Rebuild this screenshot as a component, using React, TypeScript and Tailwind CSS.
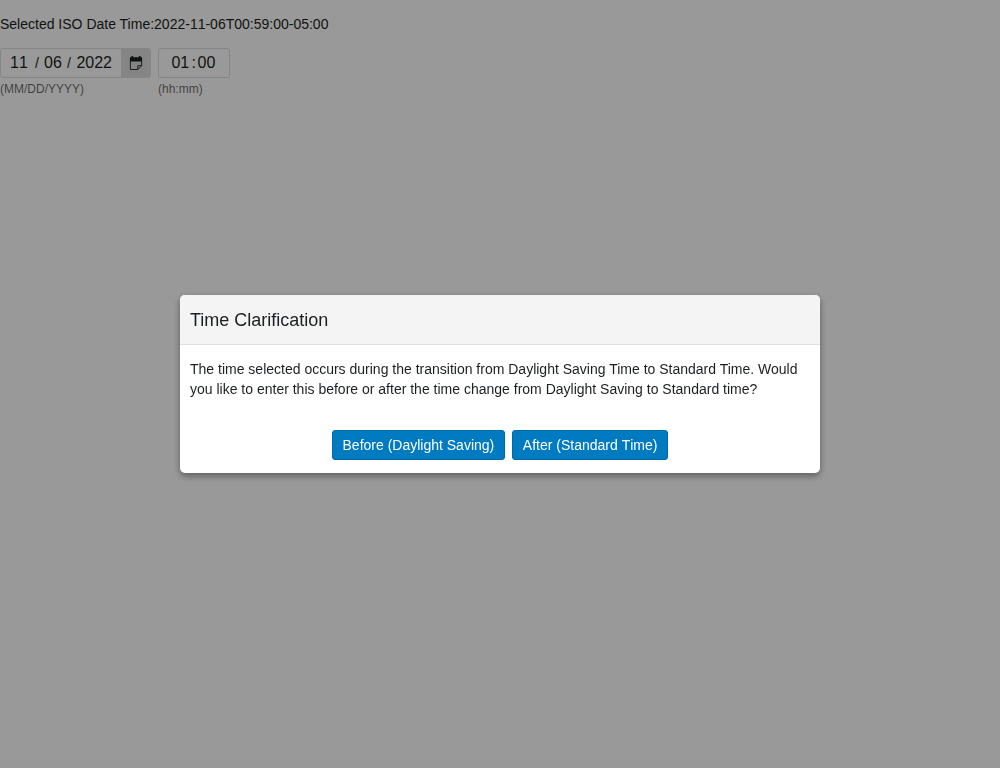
import type { ReactNode } from 'react';

function CalendarIcon() {
  return (
    <svg width="14" height="14" viewBox="0 0 14 14" className="block">
      <path d="M.9 1.3h1.6V0h1.7v1.3h5.6V0h1.7v1.3h1.6v4.2H.9z" fill="#1c1f21" />
      <path d="M1.4 5v8.5h7.4l3.8-3.8V5M8.8 13.5V9.7h3.8" fill="none" stroke="#1c1f21" strokeWidth=".9" />
    </svg>
  );
}

function DateTimeInput() {
  return (
    <div className="flex gap-[7px]">
      <div>
        <div className="flex h-[30px] w-[151px] overflow-hidden rounded-[3px] border border-[#dedede] text-base leading-[28px] [font-kerning:none]">
          <div className="flex w-[120px] pl-[9px] whitespace-pre">
            <span className="w-[25px]">11</span>
            <span className="w-[9px] text-sm leading-[29px]">/</span>
            <span className="w-[23px]">06</span>
            <span className="w-[9.4px] text-sm leading-[29px]">/</span>
            <span>2022</span>
          </div>
          <button aria-label="Calendar" className="flex flex-1 items-center justify-center bg-[#dedede]">
            <CalendarIcon />
          </button>
        </div>
        <div className="mt-[3px] text-xs text-black/60">(MM/DD/YYYY)</div>
      </div>
      <div>
        <div className="flex h-[30px] w-[72px] rounded-[3px] border border-[#dedede] pl-[12.4px] text-base leading-[28px]">
          <span className="w-[20px]">01</span>
          <span className="w-[6.2px]">:</span>
          <span>00</span>
        </div>
        <div className="mt-[3px] text-xs text-black/60">(hh:mm)</div>
      </div>
    </div>
  );
}

function PrimaryButton({ children }: { children: ReactNode }) {
  return (
    <button className="h-[30px] rounded-[3px] border border-[#006aa8] bg-[#007ac0] px-[9.8px] text-sm text-white [font-kerning:none]">
      {children}
    </button>
  );
}

export default function App() {
  return (
    <div className="h-screen overflow-hidden bg-white font-['Liberation_Sans',Arial,sans-serif] text-sm text-[#1c1f21]">
      <p className="mb-[14px] pt-[14px] leading-5">
        Selected ISO Date Time:<span className="[font-kerning:none]">2022-11-06T00:59:00-05:00</span>
      </p>
      <DateTimeInput />
      <div className="fixed inset-0 flex items-center justify-center bg-black/40">
        <div
          role="dialog"
          className="h-[178px] w-[640px] overflow-hidden rounded-[5px] bg-white shadow-[0_3px_7px_rgba(0,0,0,0.4)]"
        >
          <h1 className="h-[50px] border-b border-[#dedfe0] bg-[#f4f4f4] px-[10px] text-lg leading-[50px]">
            Time Clarification
          </h1>
          <p className="px-[10px] pt-[14px] leading-5">
            The time selected occurs during the transition from Daylight Saving Time to Standard Time. Would you like to
            enter this before or after the time change from Daylight Saving to Standard time?
          </p>
          <div className="mt-[31px] flex justify-center gap-[7px]">
            <PrimaryButton>Before (Daylight Saving)</PrimaryButton>
            <PrimaryButton>After (Standard Time)</PrimaryButton>
          </div>
        </div>
      </div>
    </div>
  );
}
